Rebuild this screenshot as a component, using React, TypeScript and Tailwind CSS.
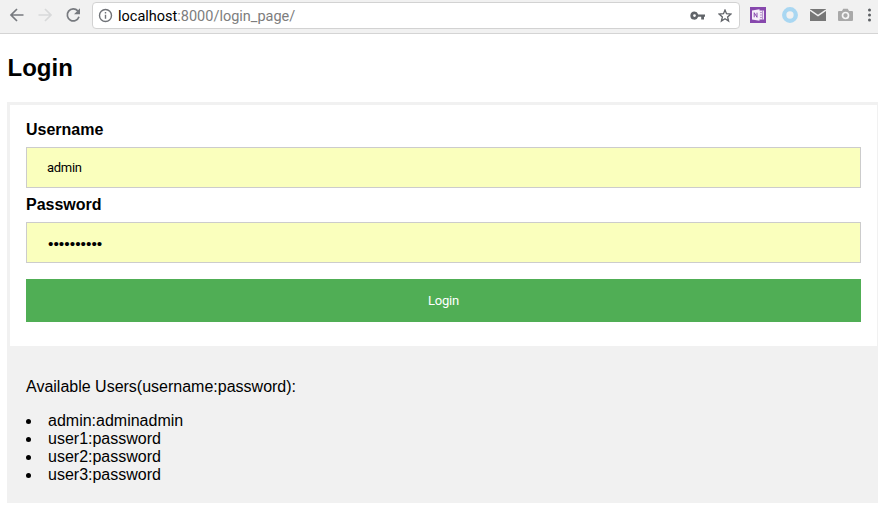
import React from "react";

const users = ["admin:adminadmin", "user1:password", "user2:password", "user3:password"];

function Toolbar() {
  return (
    <header className="flex h-[34px] items-start border-b border-[#d4d4d4] bg-[#f1f1f1] pt-0.5 font-[Roboto,sans-serif]">
      <div className="flex h-[26px] w-[92px] shrink-0 items-center gap-2.5 pl-2">
        <svg className="size-[18px] shrink-0" viewBox="0 0 18 18" fill="none" stroke="#777a7f" strokeWidth="1.7">
          <path d="M15.500 9H3.500M9 3L3 9l6 6" />
        </svg>
        <svg className="size-[18px] shrink-0" viewBox="0 0 18 18" fill="none" stroke="#d8d9da" strokeWidth="1.7">
          <path d="M2.500 9h12M9 3l6 6-6 6" />
        </svg>
        <svg className="size-[18px] shrink-0" viewBox="0 0 18 18" fill="none" stroke="#777a7f" strokeWidth="1.7">
          <path d="M13.8 4.900A6 6 0 1 0 15 10.800" />
          <path d="M16 2.200v6h-6z" fill="#777a7f" stroke="none" />
        </svg>
      </div>
      <div className="flex h-[27px] w-[648px] shrink-0 items-center rounded-[4px] border border-[#d2d2d2] bg-white pr-[7px] pl-[5px]">
        <svg className="size-[15px]" viewBox="0 0 15 15" fill="none" stroke="#707378" strokeWidth="1.400">
          <circle cx="7.500" cy="7.500" r="6" />
          <path d="M7.500 6.700v4M7.500 4v1.400" />
        </svg>
        <span className="mt-0.5 ml-[5px] text-[14.5px] leading-5 text-[#7d7d7d]">
          <span className="text-black">localhost</span>:8000/login_page/
        </span>
        <svg className="ml-auto h-[10px] w-4" viewBox="0 0 16 10" fill="#616469">
          <path fillRule="evenodd" d="M4.500.600a4 4 0 1 0 3.700 5.200h3V8.400H14V5.800h1V3.400H8.200A4 4 0 0 0 4.500.600Zm0 2.600a1.400 1.400 0 1 1 0 2.800 1.400 1.400 0 0 1 0-2.800Z" />
        </svg>
        <svg className="ml-3 size-[14px]" viewBox="0 0 14 14" fill="none" stroke="#616469" strokeWidth="1.300">
          <path d="M7 1l1.500 3.700 4.400.4-3.300 2.800 1 4.200L7 9.800l-3.600 2.300 1-4.200L1.100 5.100l4.400-.4z" />
        </svg>
      </div>
      <div className="flex h-[26px] shrink-0 items-center pl-[10px]">
        <svg className="size-4" viewBox="0 0 16 16">
          <path d="M0 0h16v16H0z" fill="#8748ad" />
          <path d="M9 3.500h5v9H9z" fill="#eee5f3" />
          <path d="M10 5.500h2M10 8h2M10 10.500h2M12.500 3.500v9" stroke="#8748ad" strokeWidth=".5" />
          <path d="M2 3.400l7.500-1.200v11.600L2 12.600z" fill="#f5effa" />
          <path d="M4.200 10.300V5.700l2.800 4.600V5.700" fill="none" stroke="#8748ad" strokeWidth="1" />
        </svg>
        <svg className="ml-4 size-4" viewBox="0 0 16 16" fill="none">
          <circle cx="8" cy="8" r="5.800" stroke="#a9d7f2" strokeWidth="4.300" />
        </svg>
        <svg className="ml-3 h-3 w-4" viewBox="0 0 16 12">
          <path d="M0 0h16v12H0z" fill="#777" />
          <path d="M0 1l8 5.500L16 1" fill="none" stroke="#f1f1f1" strokeWidth="1.500" />
        </svg>
        <svg className="ml-3 h-[14px] w-[15px]" viewBox="0 0 15 14">
          <path d="M1 3h3l1.200-2.200h4.600L11 3h3q1 0 1 1v8q0 1-1 1H1q-1 0-1-1V4q0-1 1-1z" fill="#a9a9a9" />
          <circle cx="7.500" cy="7.500" r="3" fill="none" stroke="#f6f6f6" strokeWidth="1.700" />
        </svg>
        <svg className="ml-[14px] h-[14px] w-1" viewBox="0 0 4 14" fill="#5d6064">
          <circle cx="2.500" cy="2" r="1.500" /><circle cx="2.500" cy="7" r="1.500" /><circle cx="2.500" cy="12" r="1.500" />
        </svg>
      </div>
    </header>
  );
}

export default function App() {
  return (
    <div className="h-[507px] w-full overflow-hidden bg-white font-['Liberation_Sans',Arial,sans-serif] text-base leading-[18px] text-black">
      <Toolbar />
      <main className="w-[872px] pl-[7px]">
        <h1 className="mt-5 h-[48px] pl-[0.5px] text-2xl leading-7 font-bold">Login</h1>
        <form className="w-[873px] border-[3px] border-[#f1f1f1]">
          <div className="h-[241px] px-4 pt-4">
            <label className="block h-[26px] font-bold" htmlFor="username">Username</label>
            <input id="username" type="text" defaultValue="admin" className="block h-[41px] w-[835px] border border-[#ccc] bg-[#faffbd] px-5 font-[Roboto,sans-serif] text-[13px] tracking-[-0.3px]" />
            <label className="mt-2 block h-[26px] font-bold" htmlFor="password">Password</label>
            <input id="password" type="password" defaultValue="adminadmin" className="block h-[41px] w-[835px] border border-[#ccc] bg-[#faffbd] pt-0.5 pr-5 pl-[21px] text-[15.5px]" />
            <button type="button" className="mt-4 block h-[43px] w-[835px] bg-[#50ae55] font-[Roboto,sans-serif] text-[13px] tracking-[-0.2px] text-white">Login</button>
          </div>
          <section className="h-[154px] bg-[#f1f1f1] px-4 pt-8">
            <p>Available Users(username:password):</p>
            <ul className="mt-4">
              {users.map((user) => (
                <li key={user} className="flex h-[18px] items-center">
                  <span className="size-[5px] rounded-full bg-black" />
                  <span className="ml-[17px]">{user}</span>
                </li>
              ))}
            </ul>
          </section>
        </form>
      </main>
    </div>
  );
}
